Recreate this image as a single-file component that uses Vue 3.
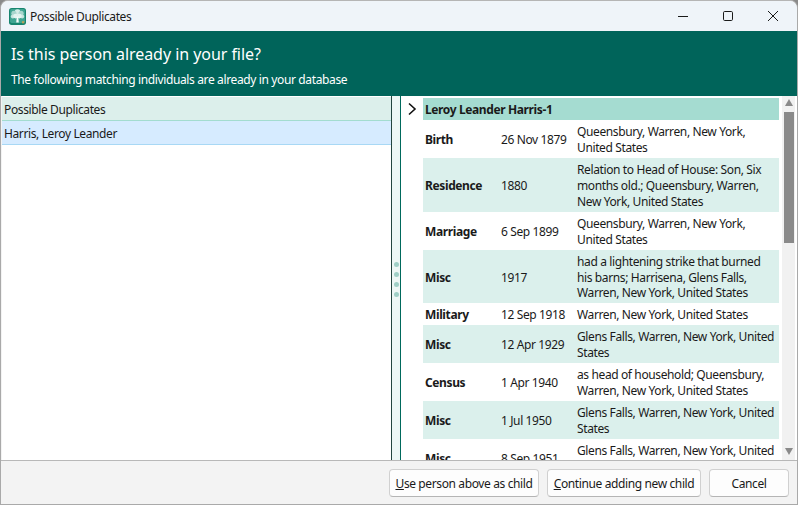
<template>
	<div class="window">
		<!-- title bar -->
		<div class="titlebar">
			<svg class="app-icon" viewBox="0 0 16 16">
				<rect x="0" y="0" width="16" height="16" rx="2.5" fill="#17856f" />
				<rect x="1" y="1" width="14" height="13" rx="1.5" fill="#3fa592" />
				<circle cx="8" cy="4" r="2.8" fill="#d3ece7" />
				<circle cx="4.6" cy="5" r="2.4" fill="#a8d6cd" />
				<circle cx="11.4" cy="5" r="2.4" fill="#a8d6cd" />
				<circle cx="3.6" cy="8" r="1.9" fill="#c6e6df" />
				<circle cx="12.4" cy="8" r="1.9" fill="#c6e6df" />
				<circle cx="6.2" cy="7.6" r="2.2" fill="#e2f4f0" />
				<circle cx="9.8" cy="7.6" r="2.2" fill="#e2f4f0" />
				<path d="M7.3 8h1.4l.5 5.6H6.8z" fill="#f4fbf9" />
				<rect x="12.2" y="12.4" width="2.2" height="2" fill="#b9a25a" />
			</svg>
			<span class="title-text">Possible Duplicates</span>
			<div class="win-buttons">
				<svg viewBox="0 0 12 12"><path d="M1 6.5h10" /></svg>
				<svg viewBox="0 0 12 12"><rect x="1.5" y="1.5" width="9" height="9" rx="1.2" /></svg>
				<svg viewBox="0 0 12 12"><path d="M1 1l10 10M11 1L1 11" /></svg>
			</div>
		</div>

		<!-- banner -->
		<div class="banner">
			<div class="banner-title">Is this person already in your file?</div>
			<div class="banner-sub">The following matching individuals are already in your database</div>
		</div>

		<div class="panes">
			<div class="left-pane">
				<div class="list-head">Possible Duplicates</div>
				<div class="list-row">Harris, Leroy Leander</div>
			</div>

			<div class="splitter">
				<span class="grip" v-for="n in 4" :key="n"></span>
			</div>

			<div class="right-pane">
				<svg class="chevron" viewBox="0 0 10 14"><path d="M2 1.5L8 7l-6 5.5" /></svg>
				<div class="details">
					<div class="person-head">Leroy Leander Harris-1</div>
					<div
						v-for="(fact, i) in facts"
						:key="i"
						class="fact"
						:class="{ alt: i % 2 === 1 }">
						<span class="fact-type">{{ fact.type }}</span>
						<span class="fact-date">{{ fact.date }}</span>
						<span class="fact-place">{{ fact.place }}</span>
					</div>
				</div>
				<div class="scrollbar">
					<span class="arrow up"></span>
					<span class="thumb"></span>
					<span class="arrow down"></span>
				</div>
			</div>
		</div>

		<div class="footer">
			<button class="btn btn-use"><u>U</u>se person above as child</button>
			<button class="btn btn-new"><u>C</u>ontinue adding new child</button>
			<button class="btn btn-cancel">Cancel</button>
		</div>
	</div>
</template>

<script setup>
	const facts = [
		{ type: "Birth", date: "26 Nov 1879", place: "Queensbury, Warren, New York,\nUnited States" },
		{ type: "Residence", date: "1880", place: "Relation to Head of House: Son, Six\nmonths old.; Queensbury, Warren,\nNew York, United States" },
		{ type: "Marriage", date: "6 Sep 1899", place: "Queensbury, Warren, New York,\nUnited States" },
		{ type: "Misc", date: "1917", place: "had a lightening strike that burned\nhis barns; Harrisena, Glens Falls,\nWarren, New York, United States" },
		{ type: "Military", date: "12 Sep 1918", place: "Warren, New York, United States" },
		{ type: "Misc", date: "12 Apr 1929", place: "Glens Falls, Warren, New York, United\nStates" },
		{ type: "Census", date: "1 Apr 1940", place: "as head of household; Queensbury,\nWarren, New York, United States" },
		{ type: "Misc", date: "1 Jul 1950", place: "Glens Falls, Warren, New York, United\nStates" },
		{ type: "Misc", date: "8 Sep 1951", place: "Glens Falls, Warren, New York, United\nStates" }
	];
</script>

<style>
	html,
	body {
		margin: 0;
		background: #8a8a8a;
	}
</style>

<style scoped>
	.window {
		width: 798px;
		height: 505px;
		box-sizing: border-box;
		display: flex;
		flex-direction: column;
		border: 1px solid #a9a9a9;
		border-top-color: #b5b5b5;
		border-radius: 8px 8px 0 0;
		overflow: hidden;
		font-family: "Noto Sans", "Liberation Sans", sans-serif;
		font-size: 12px;
		letter-spacing: -0.38px;
		color: #1a1a1a;
		background: #f3f3f3;
	}

	.titlebar {
		height: 30px;
		flex: none;
		display: flex;
		align-items: center;
		background: #eff4f9;
		padding-left: 8px;
	}

	.app-icon {
		width: 17px;
		height: 17px;
		margin-right: 4px;
	}

	.title-text {
		font-size: 12px;
		line-height: 16px;
		padding-top: 1px;
	}

	.win-buttons {
		margin-left: auto;
		display: flex;
		align-items: center;
		gap: 33px;
		padding-right: 18px;
	}

	.win-buttons svg {
		width: 12px;
		height: 12px;
		fill: none;
		stroke: #1a1a1a;
		stroke-width: 1;
	}

	.banner {
		height: 65px;
		flex: none;
		box-sizing: border-box;
		background: #00645a;
		color: #fff;
		padding: 12px 10px 0;
	}

	.banner-title {
		font-size: 16px;
		line-height: 22px;
		letter-spacing: -0.05px;
	}

	.banner-sub {
		margin-top: 7px;
		font-size: 12px;
		line-height: 16px;
		letter-spacing: -0.37px;
	}

	.panes {
		flex: 1;
		min-height: 0;
		display: flex;
	}

	.left-pane {
		width: 389px;
		flex: none;
		margin-left: 1px;
		border-right: 1px solid #24453f;
		background: #fff;
		padding-top: 1px;
	}

	.list-head {
		height: 23px;
		line-height: 26px;
		padding-left: 2px;
		background: #dcefeb;
		border-bottom: 1px solid #a3dcd0;
	}

	.list-row {
		height: 23px;
		line-height: 26px;
		padding-left: 2px;
		background: #d6ebff;
		border-bottom: 1px solid #a8d8f5;
	}

	.splitter {
		width: 8px;
		flex: none;
		display: flex;
		flex-direction: column;
		align-items: center;
		justify-content: center;
		gap: 5px;
		padding-top: 2px;
		background: #edf7f5;
		border-right: 1px solid #00695c;
	}

	.grip {
		width: 5px;
		height: 5px;
		border-radius: 50%;
		background: #9fcfc6;
	}

	.right-pane {
		flex: 1;
		min-width: 0;
		display: flex;
		background: #fff;
		overflow: hidden;
	}

	.chevron {
		flex: none;
		width: 10px;
		height: 14px;
		margin: 6px 6px 0 6px;
		fill: none;
		stroke: #111;
		stroke-width: 1.6;
	}

	.details {
		width: 356px;
		flex: none;
		padding-top: 2px;
	}

	.person-head {
		height: 22px;
		line-height: 24px;
		padding-left: 2px;
		background: #a5dcd1;
		font-weight: 700;
	}

	.fact {
		display: flex;
		align-items: center;
		padding: 4px 0 2px;
		line-height: 15.94px;
	}

	.fact.alt {
		background: #dbf0ec;
	}

	.fact-type {
		width: 78px;
		flex: none;
		padding-left: 2px;
		box-sizing: border-box;
		font-weight: 700;
	}

	.fact-date {
		width: 76px;
		flex: none;
	}

	.fact-place {
		flex: 1;
		white-space: pre;
	}

	.scrollbar {
		width: 13px;
		flex: none;
		margin-left: 3px;
		display: flex;
		flex-direction: column;
		align-items: center;
		background: #f1f1f1;
		padding-top: 3px;
	}

	.arrow {
		width: 0;
		height: 0;
		border-left: 4.5px solid transparent;
		border-right: 4.5px solid transparent;
	}

	.arrow.up {
		border-bottom: 7px solid #8a8a8a;
	}

	.arrow.down {
		margin-top: auto;
		margin-bottom: 5px;
		border-top: 7px solid #8a8a8a;
	}

	.thumb {
		width: 10px;
		height: 131px;
		margin-top: 6px;
		background: #8a8a8a;
	}

	.footer {
		height: 44px;
		flex: none;
		box-sizing: border-box;
		display: flex;
		justify-content: flex-end;
		gap: 8px;
		padding: 8px 8px 0 0;
		background: #f3f3f3;
		border-top: 1px solid #b8b8b8;
	}

	.btn {
		height: 28px;
		padding: 0;
		border: 1px solid #d0d0d0;
		border-bottom-color: #b5b5b5;
		border-radius: 4px;
		background: #fdfdfd;
		color: #1a1a1a;
		font: inherit;
		letter-spacing: inherit;
	}

	.btn-use {
		width: 150px;
	}

	.btn-new {
		width: 154px;
	}

	.btn-cancel {
		width: 80px;
	}
</style>
